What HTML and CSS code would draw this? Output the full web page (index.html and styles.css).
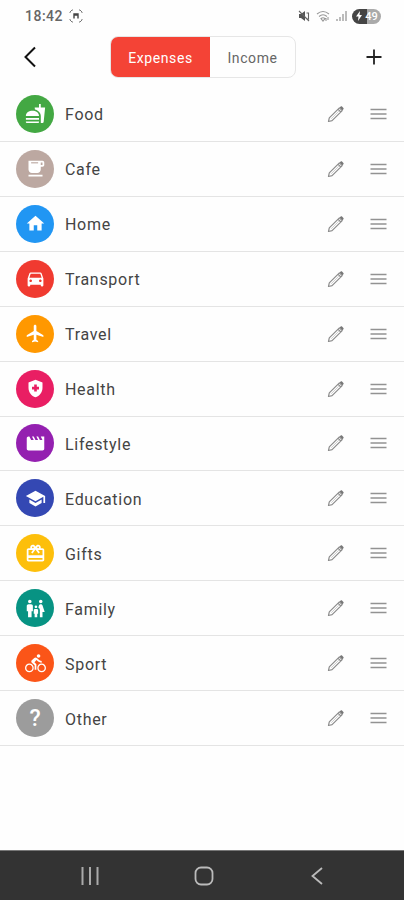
FILE: index.html
```
<!DOCTYPE html>
<html lang="en">
<head>
    <meta charset="UTF-8">
    <meta name="viewport" content="width=device-width, initial-scale=1.0">
    <title>Categories</title>
    <link rel="stylesheet" href="styles.css">
</head>
<body>
    <!-- Shared icons -->
    <svg class="sprite">
        <symbol id="pencil" viewBox="0 0 18 18">
            <path d="M1.500 16.500l.8-3.600L12.400 2.800l2.800 2.800L5.100 15.700zM11 4.200L13.800 7" fill="none" stroke="#8c8c8c" stroke-width="1.200" stroke-linejoin="round"/>
            <path d="M4.200 13.800l7.600-7.600" stroke="#c4c4c4" stroke-width=".8"/>
            <path d="M12.700 2.500l1-.9c.4-.4.9-.4 1.300 0l1.400 1.400c.4.4.4.9 0 1.300l-1 1z" fill="#777"/>
        </symbol>
        <symbol id="handle" viewBox="0 0 17 12">
            <path d="M.5 1.500h16M.5 6h16M.5 10.500h16" stroke="#929292" stroke-width="1.300"/>
        </symbol>
    </svg>

    <!-- Status Bar -->
    <div class="status-bar">
        <span class="time">18:42</span>
        <svg class="capture" width="14" height="14" viewBox="0 0 14 14" fill="none" stroke="#777">
            <path d="M1 4V3l2-2h1M10 1h1l2 2v1M13 10v1l-2 2h-1M4 13H3l-2-2v-1"/>
            <path d="M5 9.500V5h4v4.500M5 6h4" stroke="#444" stroke-width="1.400"/>
        </svg>
        <div class="status-icons">
            <svg width="12" height="12" viewBox="0 0 12 12">
                <path d="M1 4h2l4-3v10L3 8H1z" fill="#555"/>
                <path d="M1 1l10 10M8.500 3h2v6h-2" fill="none" stroke="#666" stroke-width="1.100"/>
            </svg>
            <svg width="14" height="12" viewBox="0 0 14 12" fill="none" stroke="#999" stroke-width="1.100">
                <path d="M1 4q6-5 12 0M3 6.500q4-3.500 8 0M5 8.500q2-1.500 4 0L7 11zM10 8v3M12 7v3"/>
            </svg>
            <svg width="11" height="12" viewBox="0 0 11 12" stroke="#999" stroke-width="1.300">
                <path d="M1 9v2M4 7v4M7 4v7M10 1v10"/>
            </svg>
            <div class="battery">
                <svg width="8" height="10" viewBox="0 0 8 10"><path d="M5 0L1 5.500h2.500L3 10l4-6H4.500z" fill="#fff"/></svg>
                <span>49</span>
            </div>
        </div>
    </div>

    <!-- Header -->
    <div class="header">
        <svg width="12" height="22" viewBox="0 0 12 22"><path d="M11 1.500L1.500 11 11 20.500" fill="none" stroke="#111" stroke-width="2"/></svg>
        <div class="tabs">
            <div class="tab active">Expenses</div>
            <div class="tab">Income</div>
        </div>
        <svg width="16" height="16" viewBox="0 0 16 16"><path d="M8 .5v15M.5 8h15" stroke="#222" stroke-width="1.800"/></svg>
    </div>

    <!-- Category List -->
    <div class="list">
        <div class="row">
            <div class="icon food"><svg viewBox="0 0 24 24"><path d="M18.060 22.990h1.660c.84 0 1.530-.64 1.630-1.460L23 5.050h-5V1h-1.970v4.050h-4.970l.3 2.340c1.710.47 3.310 1.320 4.270 2.260 1.440 1.420 2.430 2.890 2.430 5.290v8.050zM1 21.990V21h15.030v.99c0 .55-.45 1-1.010 1H2.010c-.56 0-1.010-.45-1.010-1zm15.030-7c0-8-15.030-8-15.030 0h15.030zM1.020 17h15v2h-15z"/></svg></div>
            <span class="name">Food</span>
            <svg class="edit"><use href="#pencil"/></svg>
            <svg class="drag"><use href="#handle"/></svg>
        </div>
        <div class="row">
            <div class="icon cafe"><svg viewBox="0 0 24 24"><path d="M20 3H4v10c0 2.210 1.790 4 4 4h6c2.210 0 4-1.790 4-4v-3h2c1.110 0 2-.89 2-2V5c0-1.110-.89-2-2-2zm0 5h-2V5h2v3zM4 19h16v2H4z"/><path d="M7 5.500h8" stroke="#bca8a1" stroke-width="1.300"/></svg></div>
            <span class="name">Cafe</span>
            <svg class="edit"><use href="#pencil"/></svg>
            <svg class="drag"><use href="#handle"/></svg>
        </div>
        <div class="row">
            <div class="icon home"><svg viewBox="0 0 24 24"><path d="M10 20v-6h4v6h5v-8h3L12 3 2 12h3v8z"/></svg></div>
            <span class="name">Home</span>
            <svg class="edit"><use href="#pencil"/></svg>
            <svg class="drag"><use href="#handle"/></svg>
        </div>
        <div class="row">
            <div class="icon transport"><svg viewBox="0 0 24 24"><path d="M18.920 6.010C18.720 5.420 18.160 5 17.500 5h-11c-.66 0-1.210.42-1.420 1.010L3 12v8c0 .55.45 1 1 1h1c.55 0 1-.45 1-1v-1h12v1c0 .55.45 1 1 1h1c.55 0 1-.45 1-1v-8l-2.080-5.990zM6.500 16c-.83 0-1.500-.67-1.500-1.500S5.670 13 6.500 13s1.500.67 1.500 1.500S7.330 16 6.500 16zm11 0c-.83 0-1.500-.67-1.500-1.500s.67-1.500 1.500-1.500 1.500.67 1.500 1.500-.67 1.500-1.500 1.500zM5 11l1.500-4.500h11L19 11H5z"/></svg></div>
            <span class="name">Transport</span>
            <svg class="edit"><use href="#pencil"/></svg>
            <svg class="drag"><use href="#handle"/></svg>
        </div>
        <div class="row">
            <div class="icon travel"><svg viewBox="0 0 24 24"><path d="M21 16v-2l-8-5V3.500c0-.83-.67-1.500-1.500-1.500S10 2.670 10 3.500V9l-8 5v2l8-2.500V19l-2 1.500V22l3.500-1 3.500 1v-1.500L13 19v-5.500l8 2.500z"/></svg></div>
            <span class="name">Travel</span>
            <svg class="edit"><use href="#pencil"/></svg>
            <svg class="drag"><use href="#handle"/></svg>
        </div>
        <div class="row">
            <div class="icon health"><svg viewBox="0 0 24 24"><path fill-rule="evenodd" d="M10.500 13H8v-3h2.500V7.500h3V10H16v3h-2.500v2.500h-3V13zM12 2L4 5v6.090c0 5.050 3.410 9.760 8 10.910 4.590-1.150 8-5.860 8-10.910V5l-8-3z"/></svg></div>
            <span class="name">Health</span>
            <svg class="edit"><use href="#pencil"/></svg>
            <svg class="drag"><use href="#handle"/></svg>
        </div>
        <div class="row">
            <div class="icon lifestyle"><svg viewBox="0 0 24 24"><path d="M18 4l2 4h-3l-2-4h-2l2 4h-3l-2-4H8l2 4H7L5 4H4c-1.100 0-1.990.9-1.990 2L2 18c0 1.100.9 2 2 2h16c1.100 0 2-.9 2-2V4h-4z"/></svg></div>
            <span class="name">Lifestyle</span>
            <svg class="edit"><use href="#pencil"/></svg>
            <svg class="drag"><use href="#handle"/></svg>
        </div>
        <div class="row">
            <div class="icon education"><svg viewBox="0 0 24 24"><path d="M5 13.180v4L12 21l7-3.820v-4L12 17l-7-3.820zM12 3L1 9l11 6 9-4.910V17h2V9L12 3z"/></svg></div>
            <span class="name">Education</span>
            <svg class="edit"><use href="#pencil"/></svg>
            <svg class="drag"><use href="#handle"/></svg>
        </div>
        <div class="row">
            <div class="icon gifts"><svg viewBox="0 0 24 24"><path d="M20 6h-2.180c.11-.31.18-.65.18-1 0-1.660-1.340-3-3-3-1.050 0-1.960.54-2.500 1.350l-.5.67-.5-.68C10.960 2.540 10.050 2 9 2 7.340 2 6 3.340 6 5c0 .35.07.69.18 1H4c-1.110 0-1.990.89-1.990 2L2 19c0 1.110.89 2 2 2h16c1.110 0 2-.89 2-2V8c0-1.110-.89-2-2-2zm-5-2c.55 0 1 .45 1 1s-.45 1-1 1-1-.45-1-1 .45-1 1-1zM9 4c.55 0 1 .45 1 1s-.45 1-1 1-1-.45-1-1 .45-1 1-1zm11 15H4v-2h16v2zm0-5H4V8h5.080L7 10.830 8.620 12 11 8.760l1-1.360 1 1.360L15.380 12 17 10.830 14.920 8H20v6z"/></svg></div>
            <span class="name">Gifts</span>
            <svg class="edit"><use href="#pencil"/></svg>
            <svg class="drag"><use href="#handle"/></svg>
        </div>
        <div class="row">
            <div class="icon family"><svg viewBox="0 0 24 24"><path d="M16 4c0-1.110.89-2 2-2s2 .89 2 2-.89 2-2 2-2-.89-2-2zm4 18v-6h2.500l-2.540-7.630C19.680 7.550 18.920 7 18.060 7h-.12c-.86 0-1.630.55-1.900 1.370l-.86 2.580c1.080.6 1.820 1.730 1.820 3.050v8h3zm-7.500-10.500c.83 0 1.500-.67 1.500-1.500s-.67-1.500-1.500-1.500S11 9.170 11 10s.67 1.500 1.500 1.500zM5.500 6c1.110 0 2-.89 2-2s-.89-2-2-2-2 .89-2 2 .89 2 2 2zm2 16v-7H9V9c0-1.100-.9-2-2-2H4c-1.100 0-2 .9-2 2v6h1.500v7h4zm6.500 0v-4h1v-4c0-.82-.68-1.500-1.500-1.500h-2c-.82 0-1.500.68-1.500 1.500v4h1v4h3z"/></svg></div>
            <span class="name">Family</span>
            <svg class="edit"><use href="#pencil"/></svg>
            <svg class="drag"><use href="#handle"/></svg>
        </div>
        <div class="row">
            <div class="icon sport"><svg viewBox="0 0 24 24"><path d="M15.500 5.500c1.100 0 2-.9 2-2s-.9-2-2-2-2 .9-2 2 .9 2 2 2zM5 12c-2.800 0-5 2.200-5 5s2.200 5 5 5 5-2.200 5-5-2.200-5-5-5zm0 8.500c-1.900 0-3.500-1.600-3.500-3.500s1.600-3.500 3.500-3.500 3.500 1.600 3.500 3.500-1.600 3.500-3.500 3.500zm5.800-10l2.400-2.400.8.8c1.300 1.300 3 2.100 5.100 2.100V9c-1.500 0-2.700-.6-3.600-1.500l-1.900-1.900c-.5-.4-1-.6-1.600-.6s-1.100.2-1.400.6L7.800 8.400c-.4.4-.6.9-.6 1.400 0 .6.2 1.100.6 1.400L11 14v5h2v-6.200l-2.200-2.300zM19 12c-2.800 0-5 2.200-5 5s2.200 5 5 5 5-2.200 5-5-2.200-5-5-5zm0 8.500c-1.900 0-3.500-1.600-3.500-3.500s1.600-3.500 3.500-3.500 3.500 1.600 3.500 3.500-1.600 3.500-3.500 3.500z"/></svg></div>
            <span class="name">Sport</span>
            <svg class="edit"><use href="#pencil"/></svg>
            <svg class="drag"><use href="#handle"/></svg>
        </div>
        <div class="row">
            <div class="icon other">?</div>
            <span class="name">Other</span>
            <svg class="edit"><use href="#pencil"/></svg>
            <svg class="drag"><use href="#handle"/></svg>
        </div>
    </div>

    <!-- Navigation Bar -->
    <div class="nav-bar">
        <svg width="18" height="18" viewBox="0 0 18 18"><path d="M1.500 0v18M9 0v18M16.500 0v18" stroke="#aaa" stroke-width="2"/></svg>
        <svg class="home-key" width="20" height="20" viewBox="0 0 20 20"><rect x="1.500" y="1.500" width="17" height="17" rx="5.500" fill="none" stroke="#bbb" stroke-width="1.800"/></svg>
        <svg width="12" height="18" viewBox="0 0 12 18"><path d="M11 1L1.500 9 11 17" fill="none" stroke="#bbb" stroke-width="1.800"/></svg>
    </div>
</body>
</html>
```
FILE: styles.css
```
* {
    box-sizing: border-box;
}
body {
    margin: 0;
    width: 404px;
    height: 900px;
    display: flex;
    flex-direction: column;
    background-color: #fefefe;
    font-family: Roboto, sans-serif;
    overflow: hidden;
}
svg {
    display: block;
    flex: none;
}
.sprite {
    display: none;
}
.status-bar {
    display: flex;
    align-items: center;
    height: 32px;
    padding: 0 23px 0 25px;
}
.time {
    font-size: 14px;
    font-weight: 500;
    letter-spacing: 0.5px;
    color: #666;
}
.capture {
    margin-left: 6px;
}
.status-icons {
    display: flex;
    align-items: center;
    gap: 6px;
    margin-left: auto;
}
.battery {
    display: flex;
    align-items: center;
    justify-content: center;
    gap: 2px;
    width: 29px;
    height: 15px;
    margin-left: -1px;
    border-radius: 8px;
    background: linear-gradient(to right, #444 50%, #aaa 50%);
    color: #fff;
    font-size: 11px;
    font-weight: 500;
}
.header {
    display: flex;
    align-items: center;
    height: 55px;
    padding: 0 22px 5px 24px;
}
.tabs {
    display: flex;
    width: 186px;
    height: 42px;
    margin: 0 auto 0 74px;
    border: 1px solid #e6e6e6;
    border-radius: 8px;
    overflow: hidden;
}
.tab {
    flex: 1;
    display: flex;
    align-items: center;
    justify-content: center;
    padding-top: 1px;
    font-size: 14px;
    letter-spacing: 0.6px;
    color: #666;
}
.tab.active {
    flex: none;
    width: 99px;
    background-color: #f44336;
    color: #fff;
}
.list {
    display: flex;
    flex-direction: column;
    height: 659px;
}
.row {
    flex: 1;
    display: flex;
    align-items: center;
    padding: 0 17px 0 16px;
    border-bottom: 1px solid #e4e4e4;
}
.icon {
    display: flex;
    align-items: center;
    justify-content: center;
    width: 38px;
    height: 38px;
    border-radius: 50%;
    color: #fff;
}
.icon svg {
    width: 21px;
    height: 21px;
    fill: #fff;
}
.food { background-color: #43a843; }
.cafe { background-color: #bca8a1; }
.home { background-color: #2196f3; }
.transport { background-color: #f03a30; }
.travel { background-color: #ff9800; }
.health { background-color: #e91e63; }
.lifestyle { background-color: #9420b0; }
.education { background-color: #3448b3; }
.gifts { background-color: #fdbf0b; }
.family { background-color: #079383; }
.sport { background-color: #fb5518; }
.other {
    padding-top: 1px;
    background-color: #9c9c9c;
    font-size: 23px;
    font-weight: 500;
}
.name {
    flex: 1;
    margin-left: 11px;
    padding-top: 2px;
    font-size: 16px;
    letter-spacing: 0.7px;
    color: #444;
}
.edit {
    width: 18px;
    height: 18px;
    margin-right: 25px;
}
.drag {
    width: 17px;
    height: 12px;
}
.nav-bar {
    display: flex;
    align-items: center;
    justify-content: space-between;
    height: 50px;
    margin-top: auto;
    padding: 1px 81px 0 81px;
    border-top: 1px solid #777;
    background-color: #333;
}
.home-key {
    margin-right: 3px;
}
```
